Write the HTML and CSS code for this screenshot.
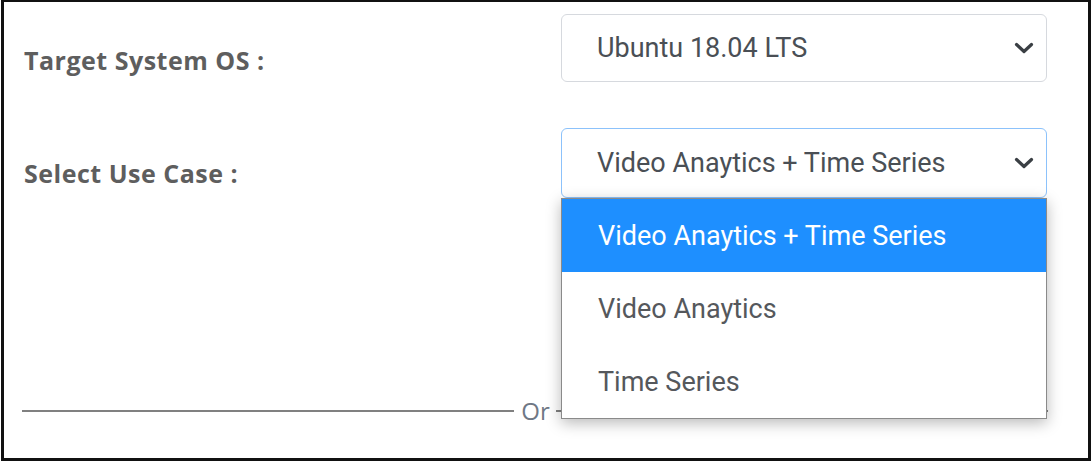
FILE: index.html
```html
<!DOCTYPE html>
<html>
<head>
<meta charset="utf-8">
<link rel="stylesheet" href="styles.css">
</head>
<body>
<div class="frame">
  <div class="form">
    <div class="row row-os">
      <label class="label">Target System OS :</label>
      <div class="select">
        <span class="value">Ubuntu 18.04 LTS</span>
        <svg class="chev" width="20" height="12" viewBox="0 0 20 12"><path d="M2.5 2.5 L10 9.5 L17.5 2.5" fill="none" stroke="#3a3f44" stroke-width="3.2" stroke-linecap="round" stroke-linejoin="round"/></svg>
      </div>
    </div>
    <div class="row row-uc">
      <label class="label">Select Use Case :</label>
      <div class="select-wrap">
        <div class="select focus">
          <span class="value">Video Anaytics + Time Series</span>
          <svg class="chev" width="20" height="12" viewBox="0 0 20 12"><path d="M2.5 2.5 L10 9.5 L17.5 2.5" fill="none" stroke="#3a3f44" stroke-width="3.2" stroke-linecap="round" stroke-linejoin="round"/></svg>
        </div>
        <ul class="menu">
          <li class="opt active">Video Anaytics + Time Series</li>
          <li class="opt">Video Anaytics</li>
          <li class="opt">Time Series</li>
        </ul>
      </div>
    </div>
    <div class="divider">
      <span class="line"></span>
      <span class="or">Or</span>
      <span class="line"></span>
    </div>
  </div>
</div>
</body>
</html>
```
FILE: styles.css
```css
html, body {
  margin: 0;
  padding: 0;
  background: #fff;
}
.frame {
  box-sizing: border-box;
  margin-left: 1px;
  width: 1090px;
  height: 461px;
  border: 3px solid #111;
  border-top-width: 2px;
  background: #fff;
  overflow: hidden;
}
.form {
  padding: 12px 40px 0 20px;
}
.row {
  display: grid;
  grid-template-columns: 537px 486px;
  align-items: center;
}
.row-uc {
  margin-top: 46px;
}
.label {
  font-family: "Open Sans", sans-serif;
  font-weight: 700;
  font-size: 25px;
  letter-spacing: 0.5px;
  color: #5e5e5e;
  padding-top: 23px;
}
.row-uc .label {
  padding-top: 19px;
}
.select {
  box-sizing: border-box;
  height: 68px;
  border: 1px solid #d6d9de;
  border-radius: 6px;
  display: flex;
  align-items: center;
  justify-content: space-between;
  padding: 0 12px 0 35px;
  font-family: Roboto, sans-serif;
  font-size: 27px;
  color: #4a4f55;
  background: #fff;
}
.select.focus {
  border-color: #8cc2fb;
  height: 70px;
}
.select-wrap {
  position: relative;
}
.menu {
  position: absolute;
  left: 0;
  top: 70px;
  width: 486px;
  box-sizing: border-box;
  margin: 0;
  padding: 0;
  list-style: none;
  border: 1px solid #8a8a8a;
  background: #fff;
  box-shadow: 0 4px 14px rgba(0, 0, 0, 0.28);
  z-index: 5;
}
.opt {
  height: 73px;
  display: flex;
  align-items: center;
  padding: 0 0 0 36px;
  box-sizing: border-box;
  font-family: Roboto, sans-serif;
  font-size: 27px;
  color: #55585c;
}
.opt.active {
  background: #1e8fff;
  color: #fff;
}
.divider {
  display: flex;
  align-items: center;
  margin-top: 201px;
  margin-left: -2px;
}
.line {
  flex: 1;
  height: 2px;
  background: #808080;
}
.or {
  font-family: "Open Sans", sans-serif;
  font-size: 24px;
  color: #6f7885;
  padding: 0 6px 0 7px;
  line-height: 1;
}
```
